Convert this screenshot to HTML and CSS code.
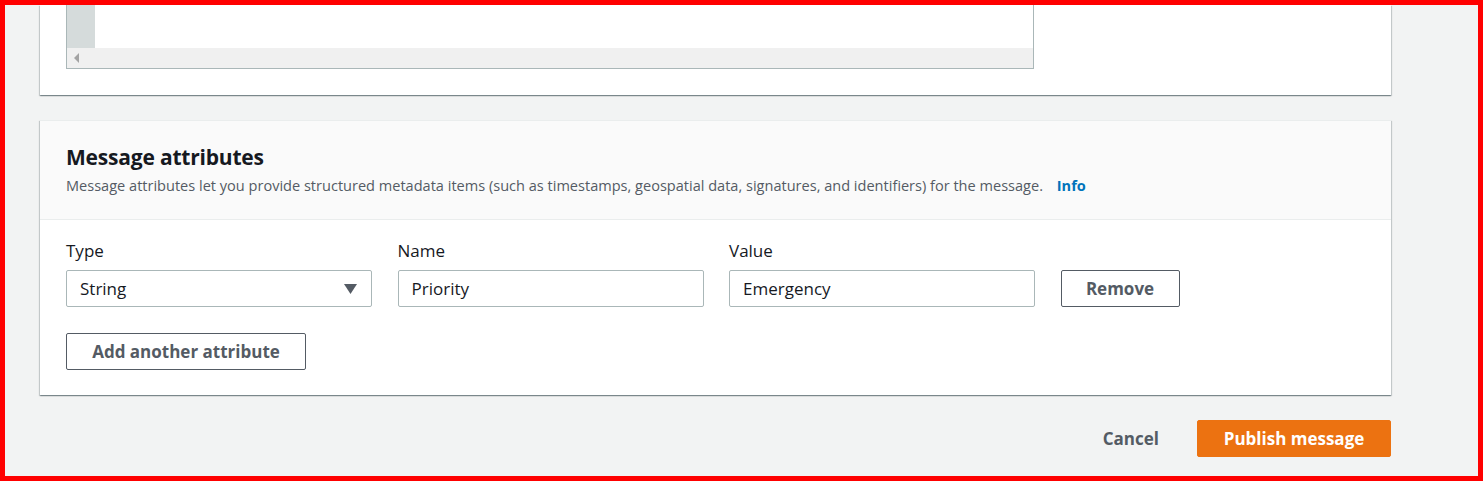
FILE: index.html
```html
<!DOCTYPE html>
<html lang="en">
<head>
    <meta charset="UTF-8">
    <meta name="viewport" content="width=device-width, initial-scale=1.0">
    <title>Publish message</title>
    <link rel="stylesheet" href="styles.css">
</head>
<body>
    <div class="frame">
        <div class="page">
            <div class="panel panel-body">
                <div class="editor">
                    <div class="editor-lines">
                        <div class="gutter"></div>
                        <div class="code"></div>
                    </div>
                    <div class="hscroll">
                        <span class="scroll-arrow"></span>
                    </div>
                </div>
            </div>

            <div class="panel attributes">
                <div class="panel-header">
                    <h2>Message attributes</h2>
                    <p class="desc">Message attributes let you provide structured metadata items (such as timestamps, geospatial data, signatures, and identifiers) for the message. <a href="#" class="info">Info</a></p>
                </div>
                <div class="panel-content">
                    <div class="attr-row">
                        <div class="field">
                            <label>Type</label>
                            <div class="select">
                                <span>String</span>
                                <svg class="caret" width="13" height="10" viewBox="0 0 13 10"><path d="M0 0h13L6.5 10z" fill="#545b64"/></svg>
                            </div>
                        </div>
                        <div class="field">
                            <label>Name</label>
                            <input type="text" value="Priority">
                        </div>
                        <div class="field">
                            <label>Value</label>
                            <input type="text" value="Emergency">
                        </div>
                        <button class="btn btn-remove">Remove</button>
                    </div>
                    <button class="btn btn-add">Add another attribute</button>
                </div>
            </div>

            <div class="actions">
                <button class="btn-link">Cancel</button>
                <button class="btn btn-primary">Publish message</button>
            </div>
        </div>
    </div>
</body>
</html>
```

FILE: styles.css
```css
* {
    box-sizing: border-box;
}

body {
    margin: 0;
    font-family: "Open Sans", "Noto Sans", Arial, sans-serif;
    color: #16191f;
}

.frame {
    width: 1483px;
    height: 481px;
    border: 5px solid #ff0000;
    overflow: hidden;
    background: #f2f3f3;
}

.page {
    width: 1351px;
    margin-left: 35px;
}

.panel {
    background: #fff;
    box-shadow: 0 1px 1px 0 rgba(0, 28, 36, 0.3), 1px 1px 1px 0 rgba(0, 28, 36, 0.15), -1px 1px 1px 0 rgba(0, 28, 36, 0.15);
}

.panel-body {
    height: 90px;
    padding: 0 26px;
}

.editor {
    width: 968px;
    height: 64px;
    border: 1px solid #aab7b8;
    border-top: none;
    display: flex;
    flex-direction: column;
}

.editor-lines {
    flex: 1;
    display: flex;
}

.gutter {
    width: 28px;
    background: #d5dbdb;
}

.code {
    flex: 1;
    background: #fff;
}

.hscroll {
    height: 20px;
    background: #f0f0f0;
    display: flex;
    align-items: center;
    padding-left: 7px;
}

.scroll-arrow {
    width: 0;
    height: 0;
    border-top: 5px solid transparent;
    border-bottom: 5px solid transparent;
    border-right: 5px solid #a3a3a3;
}

.attributes {
    margin-top: 25px;
    border-top: 1px solid #eaeded;
}

.panel-header {
    background: #fafafa;
    border-bottom: 1px solid #eaeded;
    padding: 21px 26px 24px;
    height: 99px;
}

.panel-header h2 {
    margin: 0;
    font-size: 21px;
    font-weight: 700;
    line-height: 30px;
    letter-spacing: -0.2px;
}

.desc {
    margin: 3px 0 0;
    font-size: 14.55px;
    line-height: 20px;
    color: #545b64;
}

.info {
    color: #0073bb;
    font-weight: 700;
    text-decoration: none;
    margin-left: 10px;
}

.panel-content {
    padding: 20px 26px 25px;
}

.attr-row {
    display: flex;
    align-items: flex-end;
    gap: 25.5px;
}

.field {
    display: flex;
    flex-direction: column;
    width: 306px;
}

.field label {
    font-size: 17px;
    line-height: 22px;
    margin-bottom: 8px;
}

.field input,
.select {
    height: 37px;
    border: 1px solid #aab7b8;
    border-radius: 2px;
    font-family: inherit;
    font-size: 17px;
    color: #16191f;
    padding: 0 13px;
    background: #fff;
}

.select {
    display: flex;
    align-items: center;
    justify-content: space-between;
}

.caret {
    margin-right: 1px;
}

.btn {
    font-family: inherit;
    font-weight: 700;
    font-size: 17px;
    color: #545b64;
    background: #fff;
    border: 1px solid #545b64;
    border-radius: 2px;
    height: 37px;
    padding: 0 10px;
    cursor: pointer;
}

.btn-remove {
    width: 119px;
}

.btn-add {
    margin-top: 26px;
    width: 240px;
    height: 37px;
}

.actions {
    display: flex;
    justify-content: flex-end;
    align-items: center;
    margin-top: 25px;
    gap: 13px;
}

.btn-link {
    background: none;
    border: none;
    font-family: inherit;
    font-weight: 700;
    font-size: 17px;
    color: #545b64;
    padding: 0 25px;
    height: 37px;
    cursor: pointer;
}

.btn-primary {
    background: #ec7211;
    border-color: #ec7211;
    color: #fff;
    width: 194px;
}
```
